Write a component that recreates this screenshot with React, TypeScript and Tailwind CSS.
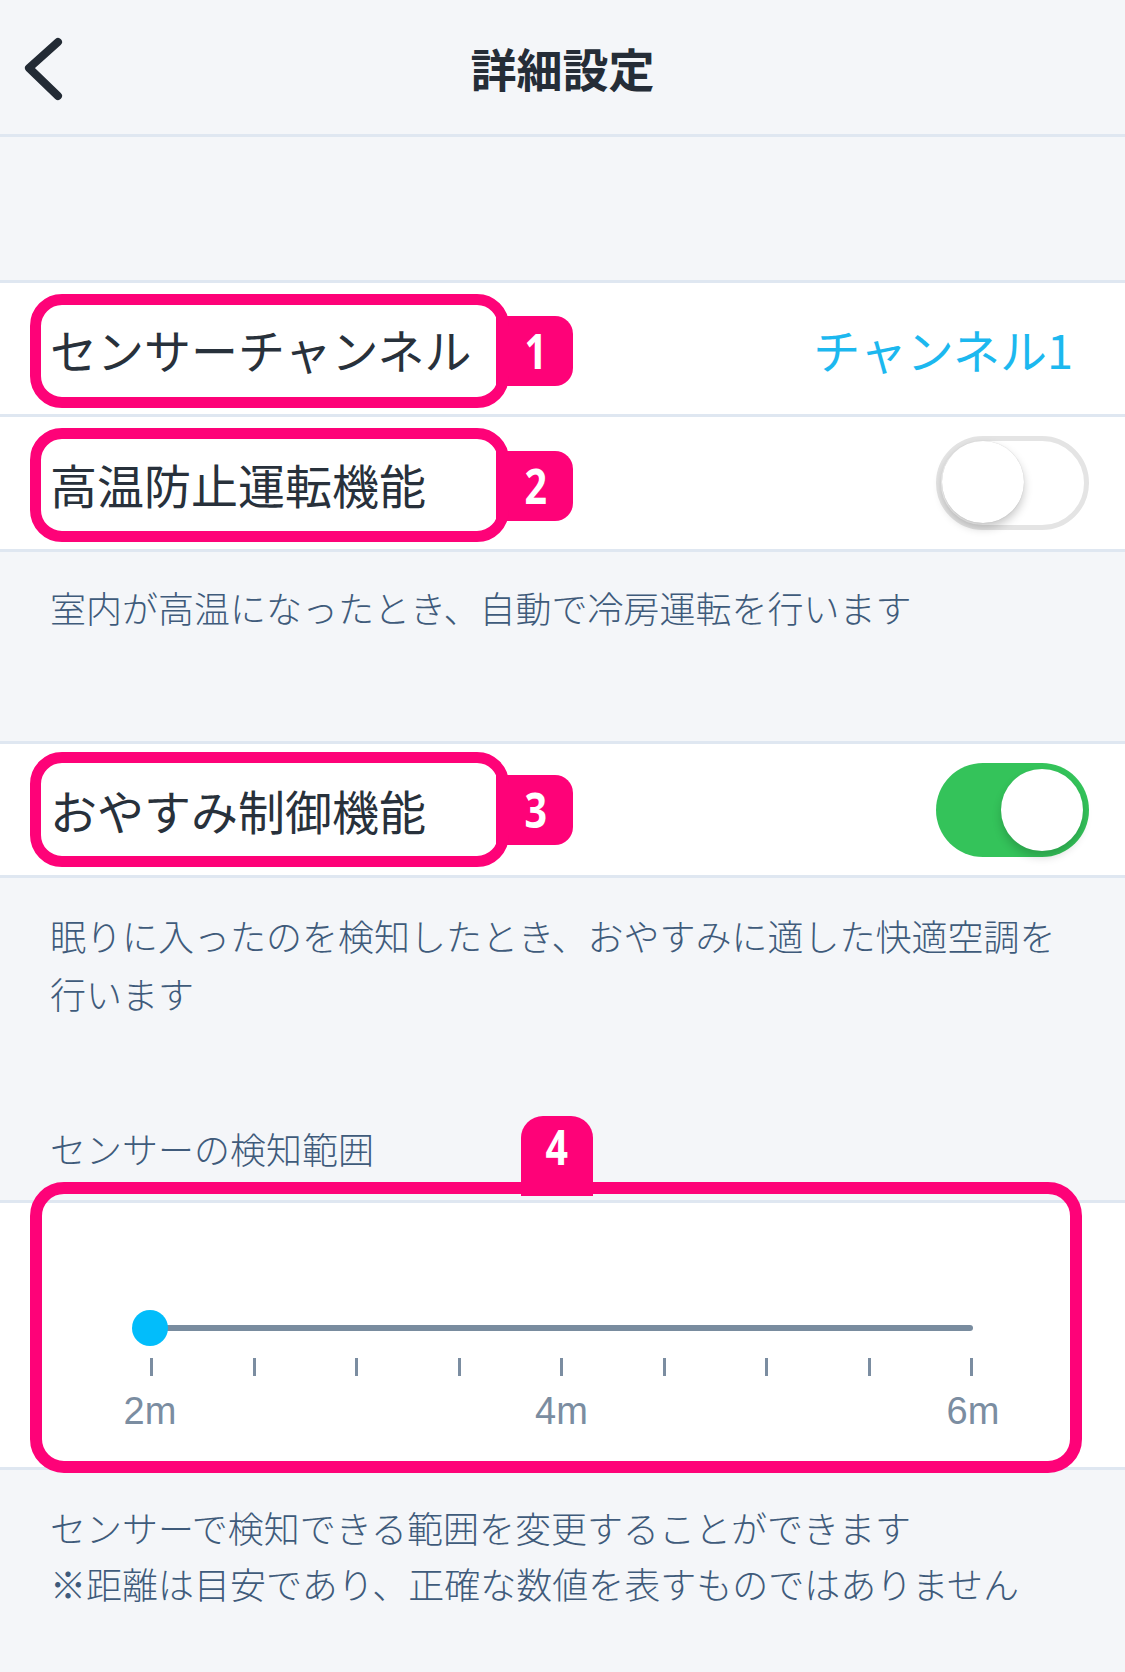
import React from "react";

const JP = { fontFamily: "'Noto Sans CJK JP', 'Noto Sans', sans-serif" } as const;
const NUM = { fontFamily: "'Open Sans', sans-serif" } as const;

function PinkFrame({ top, height, badgeTop, n }: { top: number; height: number; badgeTop: number; n: string }) {
  return (
    <>
      <div
        className="absolute left-[496px] w-[77px] h-[70px] rounded-r-[18px] bg-[#fe0278] flex items-center justify-end pr-[24px]"
        style={{ top: badgeTop }}
      >
        <span className="text-white text-[48px] font-bold leading-none scale-x-[0.82]" style={NUM}>
          {n}
        </span>
      </div>
      <div
        className="absolute left-[30px] w-[479px] rounded-[32px] border-[11px] border-[#fe0278]"
        style={{ top, height }}
      />
    </>
  );
}

function Toggle({ on }: { on: boolean }) {
  if (on) {
    return (
      <div className="relative w-[153px] h-[94px] rounded-full bg-[#34c35a]">
        <div className="absolute right-[6px] top-[6px] w-[82px] h-[82px] rounded-full bg-white shadow-[0_6px_10px_rgba(0,0,0,0.18)]" />
      </div>
    );
  }
  return (
    <div className="relative w-[153px] h-[94px] rounded-full bg-white border-[5px] border-[#e4e4e4]">
      <div className="absolute left-[1px] top-[0px] w-[82px] h-[82px] rounded-full bg-white shadow-[0_5px_10px_rgba(0,0,0,0.22),0_0_1px_rgba(0,0,0,0.2)]" />
    </div>
  );
}

export default function App() {
  const ticks = Array.from({ length: 9 });
  return (
    <div className="w-[1125px] h-[1672px] bg-[#f4f6f9] overflow-hidden" style={JP}>
      {/* Header */}
      <div className="relative h-[137px] border-b-[3px] border-[#dfe7f1] flex items-center justify-center">
        <svg className="absolute left-[20px] top-[33px]" width="46" height="72" viewBox="0 0 46 72" fill="none">
          <polyline points="38,9 9,35 38,63" stroke="#232b35" strokeWidth="8" strokeLinecap="round" strokeLinejoin="round" />
        </svg>
        <span className="text-[46px] font-bold text-[#252d37] leading-none">詳細設定</span>
      </div>

      <div className="h-[143px]" />

      {/* Group 1 */}
      <div className="bg-white border-y-[3px] border-[#dfe7f1]">
        <div className="relative h-[131px] flex items-center justify-between pl-[50px] pr-[52px] border-b-[3px] border-[#dfe7f1] box-content">
          <span className="relative z-10 text-[47px] text-[#28313b] leading-none">センサーチャンネル</span>
          <span className="text-[47px] text-[#1cb8ef] leading-none">チャンネル1</span>
          <PinkFrame top={11} height={114} badgeTop={33} n="1" />
        </div>
        <div className="relative h-[132px] flex items-center justify-between pl-[50px] pr-[36px]">
          <span className="relative z-10 text-[47px] text-[#28313b] leading-none">高温防止運転機能</span>
          <Toggle on={false} />
          <PinkFrame top={11} height={114} badgeTop={34} n="2" />
        </div>
      </div>

      <div className="h-[189px] pt-[26px] pl-[50px]">
        <p className="text-[36px] font-light leading-[58px] text-[#3f5b7b]">室内が高温になったとき、自動で冷房運転を行います</p>
      </div>

      {/* Group 2 */}
      <div className="bg-white border-y-[3px] border-[#dfe7f1]">
        <div className="relative h-[131px] flex items-center justify-between pl-[50px] pr-[36px]">
          <span className="relative z-10 text-[47px] text-[#28313b] leading-none">おやすみ制御機能</span>
          <Toggle on={true} />
          <PinkFrame top={8} height={115} badgeTop={31} n="3" />
        </div>
      </div>

      <div className="h-[322px] pt-[28px] pl-[50px] flex flex-col">
        <p className="text-[36px] font-light leading-[58px] text-[#3f5b7b]">
          眠りに入ったのを検知したとき、おやすみに適した快適空調を
          <br />
          行います
        </p>
        <p className="mt-[97px] text-[36px] font-light leading-[58px] text-[#3f5b7b]">センサーの検知範囲</p>
      </div>

      {/* Slider group */}
      <div className="relative bg-white border-y-[3px] border-[#dfe7f1]">
        <div className="h-[264px] pt-[107px] pl-[150px] pr-[152px]">
          <div className="relative h-[36px] flex items-center">
            <div className="w-full h-[6px] rounded-full bg-[#798c9f]" />
            <div className="absolute left-[-18px] top-0 w-[36px] h-[36px] rounded-full bg-[#02bdfb]" />
          </div>
          <div className="mt-[12px] h-[18px] flex justify-between">
            {ticks.map((_, i) => (
              <div key={i} className="w-[3px] h-[18px] bg-[#7b8da1]" />
            ))}
          </div>
          <div className="mt-[15px] h-[40px] flex justify-between" style={{ fontFamily: "'Liberation Sans', Arial, sans-serif" }}>
            {["2m", "4m", "6m"].map((t) => (
              <div key={t} className="w-0 flex justify-center">
                <span className="whitespace-nowrap text-[38px] leading-[40px] text-[#7b8da1]">{t}</span>
              </div>
            ))}
          </div>
        </div>
        <div className="absolute left-[521px] top-[-87px] w-[72px] h-[80px] rounded-t-[22px] bg-[#fe0278] flex justify-center pt-[7px]">
          <span className="text-white text-[48px] font-bold leading-none scale-x-[0.82]" style={NUM}>
            4
          </span>
        </div>
        <div className="absolute left-[30px] top-[-21px] w-[1052px] h-[291px] rounded-[34px] border-[12px] border-[#fe0278]" />
      </div>

      <div className="pt-[29px] pl-[50px]">
        <p className="text-[36px] font-light leading-[56px] text-[#3f5b7b]">
          センサーで検知できる範囲を変更することができます
          <br />
          ※距離は目安であり、正確な数値を表すものではありません
        </p>
      </div>
    </div>
  );
}
